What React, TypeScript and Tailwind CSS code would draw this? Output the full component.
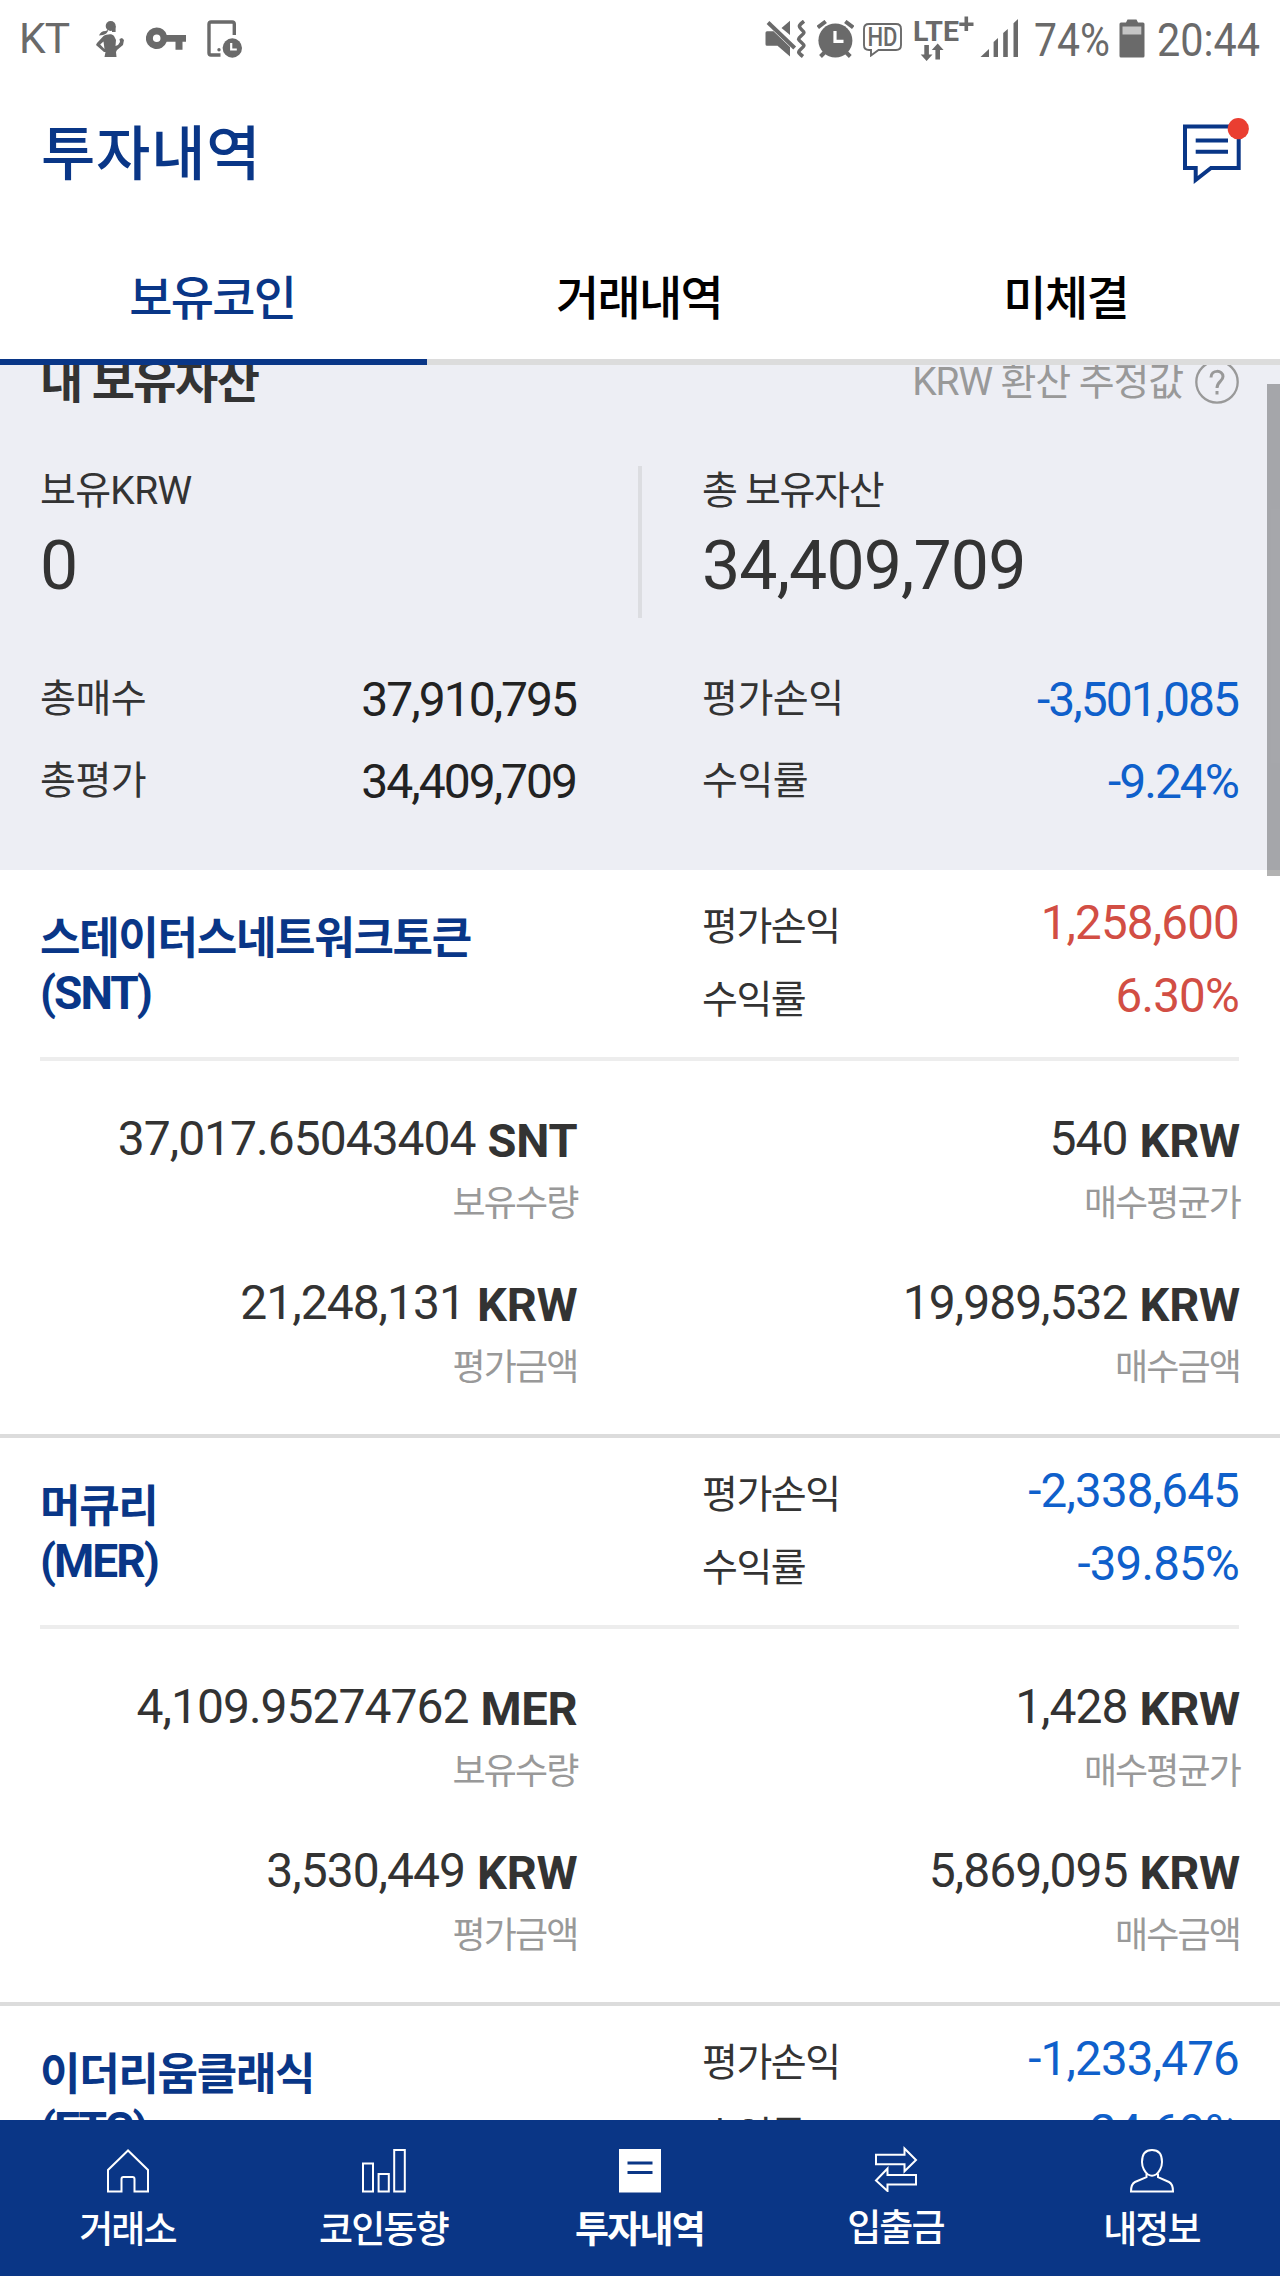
import { clsx } from "clsx";
import type { ReactNode } from "react";

type Coin = {
  name: string;
  symbol: string;
  profit: string;
  rate: string;
  amount: string;
  average: string;
  evaluated: string;
  bought: string;
};

const coins: Coin[] = [
  {
    name: "스테이터스네트워크토큰",
    symbol: "SNT",
    profit: "1,258,600",
    rate: "6.30%",
    amount: "37,017.65043404",
    average: "540",
    evaluated: "21,248,131",
    bought: "19,989,532",
  },
  {
    name: "머큐리",
    symbol: "MER",
    profit: "-2,338,645",
    rate: "-39.85%",
    amount: "4,109.95274762",
    average: "1,428",
    evaluated: "3,530,449",
    bought: "5,869,095",
  },
  {
    name: "이더리움클래식",
    symbol: "ETC",
    profit: "-1,233,476",
    rate: "-24.69%",
    amount: "482.10583216",
    average: "10,363",
    evaluated: "3,762,510",
    bought: "4,995,986",
  },
];

const tabs = ["보유코인", "거래내역", "미체결"];

function StatusBar() {
  return (
    <div className="flex h-[78px] items-start justify-between pl-[19px] pr-[19px] text-[#6a6a6a]">
      <div className="flex items-start">
        <span className="w-[77px] pt-[9px] text-[42.5px] leading-[60px] tracking-[-1px]">KT</span>
        <svg className="mt-[21px]" width="28" height="36" viewBox="0 0 28 36" fill="currentColor">
          <circle cx="14.7" cy="5" r="5" />
          <path d="M16 5h3.6v6H16zM12 9 9.5 10 C6 10 4 12 3 14.5 L7 14 C10 13 11 12 12 10z" />
          <path
            fillRule="evenodd"
            d="M7.5 15C10 13.5 16 12 18 15l2 4-.5 6 2.5-1 2-3-.5-3L26 17l2 2-1 5-6 5-1 2 .5 5H8.5l1-5H8L0 24l1-2zM7.5 20.5 4.2 23.5 8.5 28z"
          />
        </svg>
        <svg className="ml-[22px] mt-[27px]" width="40" height="24" viewBox="0 0 40 24" fill="currentColor">
          <path
            fillRule="evenodd"
            d="M10.7.6a10.7 10.7 0 1 0 10 14.2H29.5v8H36.5v-8H40V8H20.7a10.7 10.7 0 0 0-10-7.4zM10.7 7.5a3.8 3.8 0 1 1 0 7.6 3.8 3.8 0 0 1 0-7.6z"
          />
        </svg>
        <svg className="ml-[21px] mt-[20px]" width="36" height="38" viewBox="0 0 36 38" fill="none" stroke="currentColor">
          <path strokeWidth="3.4" d="M27.3 15V4q0-2-2-2H4Q2 2 2 4v29q0 2 2 2h9.5" />
          <circle cx="12" cy="29.7" r="1.7" fill="currentColor" stroke="none" />
          <circle cx="25.3" cy="28" r="9.7" fill="currentColor" stroke="none" />
          <path stroke="#fff" strokeWidth="2.2" d="M24.2 23v6.5h5.6" />
        </svg>
      </div>
      <div className="flex items-start">
        <svg className="mt-[20px]" width="41" height="38" viewBox="0 0 41 38" fill="currentColor">
          <path d="M2 11.3h6.5L25 27v9.5L12.5 25.700H2q-1.5 0-1.5-1.5V12.8q0-1.5 1.5-1.5zM16.5 8 25 .7V15z" />
          <path stroke="currentColor" strokeWidth="4" d="M3 2.5 29.7 28" />
          <path
            fill="none"
            stroke="currentColor"
            strokeWidth="3.6"
            d="M39 1.2C34 5 33 6.5 36.5 9.5s3 3.5-.5 6.5-3 3.5.5 6.5 3 3.5-.5 6.5-3 3.5 2 7.5"
          />
        </svg>
        <svg className="ml-[11px] mt-[20px]" width="37" height="38" viewBox="0 0 37 38" fill="none" stroke="currentColor">
          <circle cx="18.4" cy="20.5" r="17" fill="currentColor" stroke="none" />
          <path strokeWidth="4" d="M.8 7.5 8.7 1.5M28.3 1.5l7.9 6M3.5 36.5l5-5M33.3 36.5l-5-5" />
          <path stroke="#fff" strokeWidth="3.2" d="M18 11v10.3h8.5" />
        </svg>
        <svg className="ml-[9px] mt-[23px]" width="39" height="34" viewBox="0 0 39 34" fill="none" stroke="currentColor">
          <path
            strokeWidth="1.9"
            d="M6 1h27q5 0 5 5v16q0 5-5 5H15.5L8 32.5V27H6q-5 0-5-5V6q0-5 5-5z"
          />
          <text
            x="4.5"
            y="22.8"
            fill="currentColor"
            stroke="none"
            textLength="30"
            lengthAdjust="spacingAndGlyphs"
            className="font-['Roboto'] text-[25px] font-medium"
          >
            HD
          </text>
        </svg>
        <svg className="ml-[12px] mt-[16px]" width="60" height="46" viewBox="0 0 60 46" fill="currentColor">
          <text
            x="-1"
            y="25"
            textLength="46"
            lengthAdjust="spacingAndGlyphs"
            className="font-['Roboto'] text-[28px] font-bold"
          >
            LTE
          </text>
          <path d="M50.5.5h3.6v6h5.4v3.4h-5.4v5h-3.6v-5h-5.2V6.5h5.2zM10.3 29h4.6v9.5h3.6L12.6 45l-5.9-6.5h3.6zM21.4 43.5h4.6v-9.5h3.6l-5.9-6.5L17.8 34h3.6z" />
        </svg>
        <svg className="ml-[6px] mt-[19px]" width="39" height="38" viewBox="0 0 39 38" fill="currentColor">
          <path d="M0 38.5 9 30v8.5zM13.6 23l4.4-4v19.5h-4.4zM23.2 14l4.6-4v28.5h-4.6zM33.5 4.3 38 0v38.5h-4.5z" />
        </svg>
        <span className="ml-[15px] w-[85px] origin-left scale-x-[0.87] pt-[10px] text-[47px] leading-[60px]">74%</span>
        <svg className="mt-[19px]" width="26" height="39" viewBox="0 0 26 39" fill="currentColor">
          <path d="M7 3.5 8.5.5h9L19 3.5h5q1.5 0 1.5 1.5v32q0 1.5-1.5 1.5H2Q.5 38.500.5 37V5Q.5 3.5 2 3.5z" />
          <path fill="#c5c5c5" d="M3.5 7.5h18.8v8H3.5z" />
        </svg>
        <span className="ml-[12px] w-[104px] origin-left scale-x-[0.88] pt-[10px] text-[47px] leading-[60px]">20:44</span>
      </div>
    </div>
  );
}

function MessageIcon() {
  return (
    <svg width="66" height="68" viewBox="0 0 66 68" fill="none" stroke="#093687" strokeWidth="4">
      <path d="M2 8.5h53.7V50H28L12.7 62V50H2zM12.7 22.4H45M12.7 33.8H45" />
      <circle cx="55.3" cy="10.7" r="10.6" fill="#ea3e31" stroke="none" />
    </svg>
  );
}

function SummaryRow({ label, value, negative }: { label: string; value: string; negative?: boolean }) {
  return (
    <div className="flex items-center justify-between leading-[81px]">
      <span className="mt-px text-[39px] tracking-[-0.5px] text-[#333]">{label}</span>
      <span className={clsx("text-[48px] tracking-[-2px]", negative ? "text-[#0f60cb]" : "text-[#222]")}>
        {value}
      </span>
    </div>
  );
}

function Summary() {
  return (
    <section className="h-[505px] bg-[#edeef4] pl-[40px] pr-[42px]">
      <div className="flex h-[101px] items-start justify-between">
        <h2 className="-mt-[10px] text-[47px] font-bold leading-[54px] tracking-[-1.6px] text-[#333]">내 보유자산</h2>
        <div className="-mt-[10px] -mr-[1px] flex items-center text-[#999]">
          <span className="text-[39px] leading-[54px] tracking-[-1.1px]">KRW 환산 추정값</span>
          <svg className="ml-[12px]" width="44" height="44" viewBox="0 0 44 44" fill="none" stroke="currentColor">
            <circle cx="22" cy="22" r="20.7" strokeWidth="2.3" />
            <path strokeWidth="3" d="M16 17.5c0-8 12-8 12-1 0 5-6 5-6 11.5M22 31v3.5" />
          </svg>
        </div>
      </div>
      <div className="grid h-[152px] grid-cols-[602px_1fr]">
        <div className="border-r-4 border-[#dcdde1]">
          <div className="-mt-[1px] text-[39px] leading-[52px] tracking-[-0.7px] text-[#333]">보유KRW</div>
          <div className="mt-[11px] text-[68px] leading-[76px] tracking-[-0.9px] text-[#333]">0</div>
        </div>
        <div className="pl-[60px]">
          <div className="-mt-[1px] text-[39px] leading-[52px] tracking-[-1.3px] text-[#333]">총 보유자산</div>
          <div className="mt-[11px] text-[68px] leading-[76px] tracking-[-0.9px] text-[#333]">34,409,709</div>
        </div>
      </div>
      <div className="mt-[40px] grid grid-cols-2 gap-x-[126px]">
        <SummaryRow label="총매수" value="37,910,795" />
        <SummaryRow label="평가손익" value="-3,501,085" negative />
        <SummaryRow label="총평가" value="34,409,709" />
        <SummaryRow label="수익률" value="-9.24%" negative />
      </div>
    </section>
  );
}

function Figure({ value, unit, caption }: { value: string; unit: string; caption: string }) {
  return (
    <div>
      <div className="flex h-[60px] justify-end gap-[12px] leading-[62px] text-[#333]">
        <span className="text-[48px] tracking-[-1px]">{value}</span>
        <span className="mt-[2px] text-[47px] font-bold tracking-[-0.2px]">{unit}</span>
      </div>
      <div className="mt-[11px] text-right text-[36px] leading-[50px] tracking-[-1.9px] text-[#999]">{caption}</div>
    </div>
  );
}

function CoinCard({ coin }: { coin: Coin }) {
  const valueColor = coin.profit.startsWith("-") ? "text-[#0f60cb]" : "text-[#d24e44]";

  return (
    <section className="h-[568px] shrink-0 border-b-4 border-[#dcdcdc] pl-[40px] pr-[40px]">
      <div className="mr-px grid h-[191px] grid-cols-2 gap-x-[125px] border-b-4 border-[#ededed]">
        <h3 className="whitespace-nowrap pt-[42px] text-[44px] font-bold leading-[54px] tracking-[-1.3px] text-[#093687]">
          {coin.name}
          <br />
          <span className="text-[46px] tracking-[-2px]">({coin.symbol})</span>
        </h3>
        <div className="pt-[17px]">
          {[
            ["평가손익", coin.profit],
            ["수익률", coin.rate],
          ].map(([label, value]) => (
            <div key={label} className="flex h-[73px] justify-between leading-[73px]">
              <span className="mt-[4px] text-[39px] tracking-[-1.5px] text-[#333]">{label}</span>
              <span className={clsx("text-[47.5px] tracking-[-0.8px]", valueColor)}>{value}</span>
            </div>
          ))}
        </div>
      </div>
      <div className="grid grid-cols-2 gap-x-[125px] gap-y-[43px] pt-[47px]">
        <Figure value={coin.amount} unit={coin.symbol} caption="보유수량" />
        <Figure value={coin.average} unit="KRW" caption="매수평균가" />
        <Figure value={coin.evaluated} unit="KRW" caption="평가금액" />
        <Figure value={coin.bought} unit="KRW" caption="매수금액" />
      </div>
    </section>
  );
}

function NavItem({ label, active, raised, children }: { label: string; active?: boolean; raised?: boolean; children: ReactNode }) {
  return (
    <div className={clsx("flex flex-1 flex-col items-center", raised ? "pt-[26px]" : "pt-[28px]")}>
      <svg width="46" height="46" viewBox="0 0 46 46" fill="none" stroke="#fff" strokeWidth="2">
        {children}
      </svg>
      <span
        className={clsx(
          "mr-[1px] mt-[12px] text-[37px] leading-[50px] tracking-[-1.8px]",
          active ? "font-bold" : "font-medium",
        )}
      >
        {label}
      </span>
    </div>
  );
}

function BottomNav() {
  return (
    <nav className="flex h-[156px] bg-[#0a3686] text-white">
      <NavItem label="거래소">
        <path d="M23 2.5 3 22V43.5h13.5V31q0-2 2-2h9q2 0 2 2v12.5H43V22z" />
      </NavItem>
      <NavItem label="코인동향">
        <path d="M2 15.5h10v28H2zM17.6 26h10.2v17.5H17.6zM33.2 2h10.6v41.5H33.2z" />
      </NavItem>
      <NavItem label="투자내역" active>
        <path fill="#fff" stroke="none" d="M2 1h42v43.5H2z" />
        <path stroke="#0a3686" strokeWidth="3" d="M10.5 15h25M10.5 24.5h25" />
      </NavItem>
      <NavItem label="입출금" raised>
        <path d="M3 8.8h28.5V2.5L43 14 31.5 25.3V18.2H3zM43 29H14.5v-6.5L3 34.5l11.5 10.5V38.5H43z" />
      </NavItem>
      <NavItem label="내정보">
        <path d="M23 2c7 0 10 4.5 10 12 0 5.5-3 10.5-6 12.5-2.5 1.5-5.5 1.5-8 0-3-2-6-7-6-12.5C13 6.5 16 2 23 2z" />
        <path d="M17.5 25.5v3.7L6 34q-4 2-4 9.5h42q0-7.5-4-9.5L29 29.2v-3.7" />
      </NavItem>
    </nav>
  );
}

export default function App() {
  return (
    <div className="flex h-[2276px] w-[1280px] flex-col overflow-hidden bg-white font-['Roboto','Noto_Sans_CJK_KR',sans-serif]">
      <StatusBar />
      <header className="flex h-[163px] items-start justify-between pl-[41px] pr-[31px]">
        <h1 className="pt-[37px] text-[59px] font-medium leading-[80px] tracking-[0.8px] text-[#093687]">투자내역</h1>
        <div className="pt-[40px]">
          <MessageIcon />
        </div>
      </header>
      <div className="grid h-[124px] shrink-0 grid-cols-3 text-center text-[47px] font-medium leading-[116px] tracking-[-1.7px]">
        {tabs.map((tab, index) => (
          <div
            key={tab}
            className={clsx(
              "border-b-6 pr-[2px]",
              index === 0 ? "border-[#093687] text-[#093687]" : "border-[#dcdcdc] text-black",
            )}
          >
            {tab}
          </div>
        ))}
      </div>
      <main className="relative h-[1755px] shrink-0 overflow-hidden">
        <Summary />
        {coins.map((coin) => (
          <CoinCard key={coin.symbol} coin={coin} />
        ))}
        <div className="absolute right-0 top-[19px] h-[492px] w-[13px] bg-black/30" />
      </main>
      <BottomNav />
    </div>
  );
}
